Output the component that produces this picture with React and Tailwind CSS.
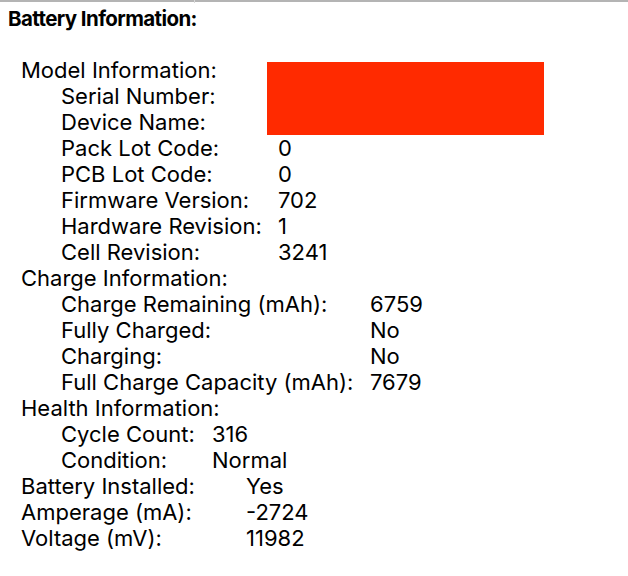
import React from 'react';

const font = { fontFamily: 'Inter, "Liberation Sans", sans-serif' };

function Row({ label, value, labelClass, indent }) {
  return (
    <div className={`flex h-[26px] items-center ${indent}`}>
      <span className={`shrink-0 ${labelClass}`}>{label}</span>
      <span>{value}</span>
    </div>
  );
}

export default function App() {
  const model = [
    ['Serial Number:', ''],
    ['Device Name:', ''],
    ['Pack Lot Code:', '0'],
    ['PCB Lot Code:', '0'],
    ['Firmware Version:', '702'],
    ['Hardware Revision:', '1'],
    ['Cell Revision:', '3241'],
  ];
  const charge = [
    ['Charge Remaining (mAh):', '6759'],
    ['Fully Charged:', 'No'],
    ['Charging:', 'No'],
    ['Full Charge Capacity (mAh):', '7679'],
  ];
  const health = [
    ['Cycle Count:', '316'],
    ['Condition:', 'Normal'],
  ];
  const top = [
    ['Battery Installed:', 'Yes'],
    ['Amperage (mA):', '-2724'],
    ['Voltage (mV):', '11982'],
  ];

  return (
    <div className="relative w-[628px] h-[576px] bg-white text-black overflow-hidden" style={font}>
      {/* top edge */}
      <div className="h-[2px] bg-[#b4b4b4]" />
      <div className="absolute left-[194px] top-0 h-[3px] w-px bg-[#d8d8d8]" />

      <h1 className="pl-[8px] pt-[4px] text-[20.5px] font-bold leading-[26px] tracking-[-0.6px]">
        Battery Information:
      </h1>

      <div className="pt-[25px] text-[22px] leading-[26px]">
        {/* Model Information */}
        <div className="relative">
          <div className="flex h-[26px] items-center pl-[21px]">Model Information:</div>
          {model.map(([l, v]) => (
            <Row key={l} label={l} value={v} indent="pl-[61px]" labelClass="w-[217px]" />
          ))}
          {/* redacted values */}
          <div className="absolute left-[267px] top-[5px] h-[73px] w-[277px] bg-[#ff2a00]" />
        </div>

        {/* Charge Information */}
        <div className="flex h-[26px] items-center pl-[21px]">Charge Information:</div>
        {charge.map(([l, v]) => (
          <Row key={l} label={l} value={v} indent="pl-[61px]" labelClass="w-[309px]" />
        ))}

        {/* Health Information */}
        <div className="flex h-[26px] items-center pl-[21px]">Health Information:</div>
        {health.map(([l, v]) => (
          <Row key={l} label={l} value={v} indent="pl-[61px]" labelClass="w-[151px]" />
        ))}

        {top.map(([l, v]) => (
          <Row key={l} label={l} value={v} indent="pl-[21px]" labelClass="w-[225px]" />
        ))}
      </div>
    </div>
  );
}
